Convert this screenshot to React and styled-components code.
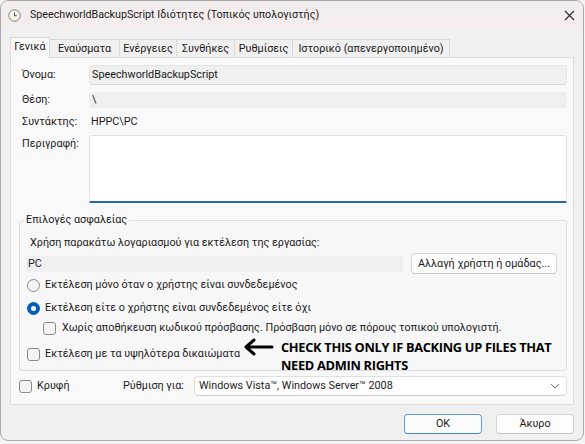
import React from 'react';
import styled, { createGlobalStyle } from 'styled-components';

const Global = createGlobalStyle`
  html, body { margin: 0; padding: 0; background: #f4f4f4; }
  body {
    font-family: Roboto, "Noto Sans", "DejaVu Sans", sans-serif;
    font-size: 10.8px;
    line-height: 16px;
    color: #1b1b1b;
  }
  * { box-sizing: border-box; }
`;

const Window = styled.div`
  width: 584px;
  height: 441px;
  border: 1px solid #a8a8a8;
  border-radius: 8px;
  background: #f0f0f0;
  overflow: hidden;
  display: flex;
  flex-direction: column;
`;

const TitleBar = styled.div`
  height: 28px;
  flex: none;
  background: #f4eded;
  display: flex;
  align-items: center;
  padding: 0 8px 0 7px;
`;

const TitleText = styled.span`
  margin-left: 9px;
  flex: 1;
  white-space: nowrap;
  color: #1a1a1a;
  font-size: 10.7px;
`;

const Body = styled.div`
  padding: 8px 9px 0 9px;
  display: flex;
  flex-direction: column;
`;

const TabStrip = styled.div`
  display: flex;
  align-items: flex-end;
  height: 20px;
`;

const Tab = styled.div`
  width: ${p => p.$w}px;
  height: ${p => (p.$active ? 21 : 18)}px;
  margin-bottom: ${p => (p.$active ? -1 : 0)}px;
  position: relative;
  z-index: ${p => (p.$active ? 1 : 0)};
  background: ${p => (p.$active ? '#f9f9f9' : '#f0f0f0')};
  border: 1px solid #d9d9d9;
  border-bottom: none;
  margin-left: -1px;
  &:first-child { margin-left: 0; }
  display: flex;
  align-items: center;
  justify-content: center;
  white-space: nowrap;
  color: #1a1a1a;
  padding-bottom: ${p => (p.$active ? 2 : 0)}px;
`;

const Panel = styled.div`
  height: 348px;
  background: #f9f9f9;
  border: 1px solid #dcdcdc;
  padding: 7px 6px 0 8px;
  display: flex;
  flex-direction: column;
`;

const Row = styled.div`
  display: grid;
  grid-template-columns: 70px 1fr;
  align-items: ${p => p.$align || 'center'};
  margin-top: ${p => p.$mt || 0}px;
`;

const Label = styled.span`
  padding-left: 3px;
  padding-top: ${p => p.$pt || 0}px;
  white-space: nowrap;
`;

const ReadField = styled.div`
  height: ${p => p.$h}px;
  background: #efefef;
  border: 1px solid ${p => (p.$border ? '#e6e6e6' : '#efefef')};
  border-bottom-color: ${p => (p.$border ? '#d8d8d8' : '#efefef')};
  border-radius: 3px;
  display: flex;
  align-items: center;
  padding-left: 2px;
  color: #1a1a1a;
`;

const PlainValue = styled.span`
  height: 16px;
  display: flex;
  align-items: center;
  padding-left: 2px;
`;

const TextArea = styled.div`
  height: 68px;
  background: #ffffff;
  border: 1px solid #e3e3e3;
  border-bottom: 2px solid #1b6db4;
  border-radius: 3px 3px 0 0;
`;

const Group = styled.fieldset`
  margin: 9px 0 0 0;
  padding: 0;
  border: 1px solid #dedede;
  border-radius: 3px;
  background: #f7f7f7;
  min-width: 0;
`;

const Legend = styled.legend`
  margin-left: 4px;
  padding: 0 2px;
  line-height: 16px;
  height: 16px;
`;

const GroupInner = styled.div`
  padding: 7px 9px 8px 6px;
  display: flex;
  flex-direction: column;
`;

const Line = styled.div`
  display: flex;
  align-items: center;
  justify-content: ${p => (p.$spread ? 'space-between' : 'flex-start')};
  height: ${p => p.$h || 16}px;
  margin-top: ${p => p.$mt || 0}px;
  padding-left: ${p => p.$pl || 0}px;
  white-space: nowrap;
  position: relative;
`;

const AccountField = styled.div`
  width: 377px;
  height: 16px;
  background: #efefef;
  display: flex;
  align-items: center;
  padding-left: 2px;
`;

const Button = styled.div`
  height: ${p => p.$h || 21}px;
  width: ${p => (p.$w ? `${p.$w}px` : 'auto')};
  padding: 0 ${p => (p.$w ? 0 : 6)}px;
  background: #fdfdfd;
  border: 1px solid ${p => (p.$default ? '#5b9fd6' : '#d6d6d6')};
  border-bottom-color: ${p => (p.$default ? '#3f8ccc' : '#c4c4c4')};
  border-radius: 4px;
  display: flex;
  align-items: center;
  justify-content: center;
  white-space: nowrap;
  color: #1a1a1a;
`;

const RadioBox = styled.span`
  width: 13px;
  height: 13px;
  flex: none;
  border-radius: 50%;
  background: ${p => (p.$on ? '#005fb8' : '#f4f4f4')};
  border: 1px solid ${p => (p.$on ? '#005fb8' : '#8a8a8a')};
  display: flex;
  align-items: center;
  justify-content: center;
  margin-right: 5px;
  &::after {
    content: '';
    display: ${p => (p.$on ? 'block' : 'none')};
    width: 5px;
    height: 5px;
    border-radius: 50%;
    background: #ffffff;
  }
`;

const CheckBox = styled.span`
  width: 13px;
  height: 13px;
  flex: none;
  border-radius: 3px;
  background: #f4f4f4;
  border: 1px solid #8a8a8a;
  margin-right: ${p => p.$mr || 5}px;
`;

const Annotation = styled.div`
  position: absolute;
  left: 218px;
  top: -8px;
  display: flex;
  align-items: flex-start;
  pointer-events: none;
`;

const Note = styled.div`
  margin-left: 7px;
  font-family: "Open Sans", "Liberation Sans", sans-serif;
  font-weight: 700;
  font-size: 12.8px;
  line-height: 18px;
  color: #000;
  letter-spacing: -0.3px;
  white-space: nowrap;
`;

const BottomRow = styled.div`
  display: grid;
  grid-template-columns: 104px 71px 1fr;
  align-items: center;
  margin-top: 5px;
`;

const CheckLabel = styled.div`
  display: flex;
  align-items: center;
  white-space: nowrap;
`;

const Select = styled.div`
  height: 20px;
  background: #ffffff;
  border: 1px solid #e0e0e0;
  border-bottom-color: #cfcfcf;
  border-radius: 4px;
  display: flex;
  align-items: center;
  justify-content: space-between;
  padding: 0 6px 0 4px;
  white-space: nowrap;
`;

const Footer = styled.div`
  display: flex;
  justify-content: flex-end;
  gap: 14px;
  padding-top: 9px;
`;

const ClockIcon = () => (
  <svg width="13" height="13" viewBox="0 0 13 13">
    <circle cx="6.5" cy="6.5" r="5.8" fill="#e9e4d8" stroke="#8a8a8a" strokeWidth="1" />
    <circle cx="6.5" cy="6.5" r="4.3" fill="#fbf6e6" />
    <path d="M6.5 3.4 V6.7 H8.8" stroke="#555" strokeWidth="1.1" fill="none" />
  </svg>
);

const CloseIcon = () => (
  <svg width="11" height="11" viewBox="0 0 11 11">
    <path d="M1 1 L10 10 M10 1 L1 10" stroke="#2a2a2a" strokeWidth="1.1" />
  </svg>
);

const Chevron = () => (
  <svg width="10" height="6" viewBox="0 0 10 6">
    <path d="M1 1 L5 5 L9 1" stroke="#7a7a7a" strokeWidth="1" fill="none" />
  </svg>
);

const Arrow = () => (
  <svg width="30" height="18" viewBox="0 0 30 18">
    <path d="M10 2 L2 9 L10 16 M2 9 H28" stroke="#000" strokeWidth="3" fill="none" strokeLinecap="round" strokeLinejoin="round" />
  </svg>
);

const tabs = [
  { t: 'Γενικά', w: 40, a: true },
  { t: 'Εναύσματα', w: 71 },
  { t: 'Ενέργειες', w: 58 },
  { t: 'Συνθήκες', w: 59 },
  { t: 'Ρυθμίσεις', w: 59 },
  { t: 'Ιστορικό (απενεργοποιημένο)', w: 158 },
];

export default function App() {
  return (
    <>
      <Global />
      <Window>
        <TitleBar>
          <ClockIcon />
          <TitleText>SpeechworldBackupScript Ιδιότητες (Τοπικός υπολογιστής)</TitleText>
          <CloseIcon />
        </TitleBar>
        <Body>
          <TabStrip>
            {tabs.map(tab => (
              <Tab key={tab.t} $w={tab.w} $active={tab.a}>{tab.t}</Tab>
            ))}
          </TabStrip>
          <Panel>
            <Row>
              <Label>Όνομα:</Label>
              <ReadField $h={20} $border>SpeechworldBackupScript</ReadField>
            </Row>
            <Row $mt={7}>
              <Label>Θέση:</Label>
              <ReadField $h={16}>\</ReadField>
            </Row>
            <Row $mt={6}>
              <Label>Συντάκτης:</Label>
              <PlainValue>HPPC\PC</PlainValue>
            </Row>
            <Row $mt={5} $align="start">
              <Label $pt={1}>Περιγραφή:</Label>
              <TextArea />
            </Row>
            <Group>
              <Legend>Επιλογές ασφαλείας</Legend>
              <GroupInner>
                <Line $pl={4}>Χρήση παρακάτω λογαριασμού για εκτέλεση της εργασίας:</Line>
                <Line $h={21} $mt={2} $spread>
                  <AccountField>PC</AccountField>
                  <Button>Αλλαγή χρήστη ή ομάδας...</Button>
                </Line>
                <Line $mt={3} $pl={1}>
                  <RadioBox />
                  Εκτέλεση μόνο όταν ο χρήστης είναι συνδεδεμένος
                </Line>
                <Line $mt={7} $pl={1}>
                  <RadioBox $on />
                  Εκτέλεση είτε ο χρήστης είναι συνδεδεμένος είτε όχι
                </Line>
                <Line $mt={4} $pl={17}>
                  <CheckBox $mr={6} />
                  Χωρίς αποθήκευση κωδικού πρόσβασης. Πρόσβαση μόνο σε πόρους τοπικού υπολογιστή.
                </Line>
                <Line $mt={10} $pl={1}>
                  <CheckBox />
                  Εκτέλεση με τα υψηλότερα δικαιώματα
                  <Annotation>
                    <Arrow />
                    <Note>
                      CHECK THIS ONLY IF BACKING UP FILES THAT
                      <br />
                      NEED ADMIN RIGHTS
                    </Note>
                  </Annotation>
                </Line>
              </GroupInner>
            </Group>
            <BottomRow>
              <CheckLabel>
                <CheckBox />
                Κρυφή
              </CheckLabel>
              <span>Ρύθμιση για:</span>
              <Select>
                <span>Windows Vista™, Windows Server™ 2008</span>
                <Chevron />
              </Select>
            </BottomRow>
          </Panel>
          <Footer>
            <Button $w={78} $h={20} $default>OK</Button>
            <Button $w={78} $h={20}>Άκυρο</Button>
          </Footer>
        </Body>
      </Window>
    </>
  );
}
